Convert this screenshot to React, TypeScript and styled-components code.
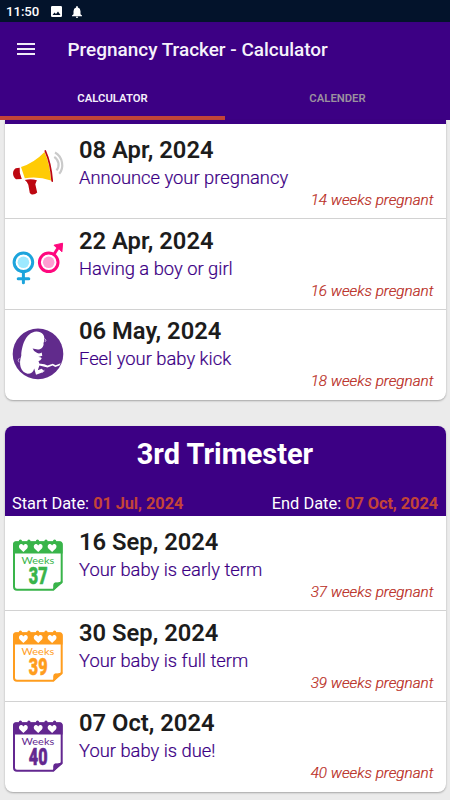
import React from "react";
import styled, { createGlobalStyle } from "styled-components";

const PURPLE = "#3c0084";
const ACCENT = "#c34438";

const GlobalStyle = createGlobalStyle`
  * { box-sizing: border-box; }
  html, body { margin: 0; padding: 0; }
  body { font-family: Roboto, sans-serif; background: #ebebeb; overflow: hidden; }
`;

const Screen = styled.div`
  width: 450px;
  height: 800px;
  overflow: hidden;
  background: #ebebeb;
  display: flex;
  flex-direction: column;
`;

const StatusBar = styled.div`
  height: 22px;
  flex: none;
  background: #03132b;
  color: #fff;
  display: flex;
  align-items: center;
  padding: 1px 0 0 6px;
  font-size: 13.2px;
  font-weight: 500;
  svg { display: block; }
`;

const Clock = styled.span`
  width: 45px;
  letter-spacing: -0.05px;
`;

const StatusIcon = styled.svg`
  margin-right: 10px;
  fill: #fff;
`;

const AppBar = styled.header`
  height: 54px;
  flex: none;
  background: ${PURPLE};
  display: flex;
  align-items: center;
  padding-left: 17px;
`;

const MenuIcon = styled.svg`
  width: 18px;
  height: 14px;
  margin-right: 32.5px;
  margin-top: -1px;
`;

const Title = styled.h1`
  margin: 0;
  color: #f6f2fb;
  font-size: 18.95px;
  font-weight: 500;
  white-space: nowrap;
`;

const Tabs = styled.nav`
  height: 44px;
  flex: none;
  display: flex;
  background: ${PURPLE};
`;

const Tab = styled.div<{ $active?: boolean }>`
  flex: 1;
  display: flex;
  align-items: center;
  justify-content: center;
  padding-top: 4px;
  border-bottom: 4px solid ${(p) => (p.$active ? ACCENT : PURPLE)};
  color: ${(p) => (p.$active ? "#f5effb" : "#9b909f")};
  font-size: 11.3px;
  font-weight: 600;
`;

const List = styled.main`
  flex: none;
  padding: 0 4.5px;
`;

const Card = styled.section<{ $continued?: boolean }>`
  background: #fff;
  border-radius: ${(p) => (p.$continued ? "0 0 8px 8px" : "8px")};
  overflow: hidden;
  margin-bottom: 26.5px;
  height: ${(p) => (p.$continued ? "279.5px" : "365.5px")};
  box-shadow: 0 1px 2px rgba(0, 0, 0, 0.3);
`;

const HeaderEdge = styled.div`
  height: 3.5px;
  background: ${PURPLE};
`;

const TrimesterHeader = styled.div`
  height: 89.5px;
  background: ${PURPLE};
  color: #fff;
  display: flex;
  flex-direction: column;
  justify-content: space-between;
  padding: 10px 7.5px 2px;
`;

const TrimesterName = styled.h2`
  margin: 0;
  text-align: center;
  font-size: 28.95px;
  line-height: 36px;
  font-weight: 700;
`;

const DateRange = styled.div`
  display: flex;
  justify-content: space-between;
  font-size: 16.4px;
  line-height: 21px;
  b { color: ${ACCENT}; font-weight: 700; letter-spacing: -0.1px; }
`;

const Row = styled.article<{ $first?: boolean }>`
  height: ${(p) => (p.$first ? "94.5px" : "90.6px")};
  padding: ${(p) => (p.$first ? "11px" : "6.6px")} 12px 0 8.5px;
  display: flex;
  border-top: ${(p) => (p.$first ? "0" : "1px solid #d2d2d2")};
`;

const Icon = styled.svg`
  width: 50px;
  height: 50px;
  flex: none;
  margin: 13px 16px 0 0;
  overflow: visible;
`;

const Details = styled.div`
  flex: 1;
  display: flex;
  flex-direction: column;
`;

const EventDate = styled.div`
  color: #1c1c1c;
  font-size: 23.75px;
  line-height: 31px;
  font-weight: 600;
`;

const EventName = styled.div`
  color: ${PURPLE};
  font-size: 18.35px;
  line-height: 24px;
  font-weight: 300;
  -webkit-text-stroke: 0.2px ${PURPLE};
`;

const Weeks = styled.div`
  align-self: flex-end;
  color: #b92b22;
  font-size: 15.25px;
  line-height: 21px;
  font-style: italic;
  font-weight: 300;
  -webkit-text-stroke: 0.2px #b92b22;
`;

const Megaphone = () => (
  <Icon viewBox="0 0 50 50">
    <path d="M8 19Q21 15 31.5 4Q37 16 38 32.5Q25 28 11.8 30.3Z" fill="#ffcb05" />
    <path d="M32.3 3Q37.8 15 39.2 33" fill="none" stroke="#bd0711" strokeWidth="1.8" strokeLinecap="round" />
    <path d="M6.7 19.7L2.7 20.3C-.8 22.4-1 28.2 3 31.2L8.8 31Q6 25.5 6.7 19.7Z" fill="#bd0711" />
    <path d="M11.8 32Q18 30.6 23.9 32.2Q22.8 34.5 22.3 36.3L24.2 44.5Q21.7 47 18.2 46.2L16.8 45L15.3 36.8Q14.3 33.8 11.8 32Z" fill="#bd0711" />
    <path d="M41.3 8.8C46 12 47 18.3 43.5 22.4M42 4.5C50 8.8 51.3 20 46.2 25.8" fill="none" stroke="#cacaca" strokeWidth="2.2" />
  </Icon>
);

const Genders = () => (
  <Icon viewBox="0 0 50 50">
    <g fill="none" stroke="#1ca4dc" strokeWidth="3" strokeLinecap="round">
      <circle cx="10.4" cy="23.3" r="9.3" />
      <path d="M10.4 33V43.8M5.2 39.7H15.8" />
    </g>
    <circle cx="10.4" cy="23.3" r="5.8" fill="#9de9ff" />
    <g fill="none" stroke="#ff087e" strokeWidth="3">
      <circle cx="35.7" cy="23.3" r="9.3" />
      <path d="M41 15.3L46 7.5" />
    </g>
    <path d="M41 6.2L49.6 4.2L48.9 12.8L46 9.8L42.4 7.7Z" fill="#ff087e" stroke="#ff087e" strokeLinejoin="round" />
    <circle cx="35.7" cy="23.3" r="5.8" fill="#ff9ed2" />
  </Icon>
);

const Baby = () => (
  <Icon viewBox="0 0 50 50">
    <circle cx="25" cy="24.9" r="25.3" fill="#612b8c" />
    <path
      d="M23.5 2.6C29 2.6 32.2 6.3 31.2 11.5C30.8 13.6 30.3 14 30.6 15.5C30 19 27.8 20.2 24.7 20.6L19.6 19.5Q20.2 22 24.2 24Q26.2 25.2 28.7 23.4L29.3 26.7L25.2 28Q28.8 27.8 28.7 29.5Q27.5 31.6 25.5 32.2L26.5 34.8Q31 34.4 34.5 36.5L39.8 34.7L42.6 36.2L47.7 34.2L46.5 36.6L42.3 38L39.6 36.6L34.5 38.5L26.4 36.5L24.8 41.2L28.6 39.8L31.5 42.2L28.5 43.8L23 45.8L21.2 39.5Q20 44.8 14.6 44.8C7.5 43 5.4 35 8.3 26.5C8.5 18.5 12 3.4 23.5 2.6Z"
      fill="#fff"
    />
    <path d="M31.5 9.5Q34.5 10.8 31.9 13M6.4 29.2Q3.8 31 6.2 33.4M31.4 40.8L29.3 43.8" fill="none" stroke="#cdb9df" strokeWidth=".9" />
  </Icon>
);

const Calendar = ({ color, week }: { color: string; week: string }) => (
  <Icon viewBox="0 0 50 50">
    <path d="M3 2.4H46.5Q48.7 2.4 48.7 5V41.8L40.3 49.7H4Q1 49.7 1 46.8V5Q1 2.4 3 2.4Z" fill="#fff" stroke={color} strokeWidth="2" />
    <path d="M.2 13.4V4.2Q.2 1.3 3 1.3H46.8Q49.6 1.3 49.6 4.2V13.4ZM40.2 50.3V45.2Q40.8 42 43.8 42.4L49.4 41.5V43Z" fill={color} />
    {[7.4, 15.9, 24.5, 33, 41.6].map((x) => (
      <circle key={x} cx={x} cy="1" r="1.6" fill={color} />
    ))}
    {[10.4, 25.2, 39.1].map((x) => (
      <path
        key={x}
        transform={`translate(${x} 7.4)`}
        d="M0 4.6L-3.7 1C-5.4-1.2-3.8-3.7-1.8-3.4Q-.7-3.3 0-1.9Q.7-3.3 1.8-3.4C3.8-3.7 5.4-1.2 3.7 1Z"
        fill="#fff"
      />
    ))}
    <text x="8.6" y="23.8" fontFamily="Lato, sans-serif" fontSize="10.3" fontWeight="400" textLength="32.6" lengthAdjust="spacingAndGlyphs" fill={color}>
      Weeks
    </text>
    <text x="15.8" y="44" fontFamily="Roboto, sans-serif" fontSize="23" fontWeight="900" textLength="18.7" lengthAdjust="spacingAndGlyphs" fill={color} stroke={color} strokeWidth=".6">
      {week}
    </text>
  </Icon>
);

interface Milestone {
  date: string;
  name: string;
  weeks: number;
  icon: React.ReactNode;
}

const secondTrimester: Milestone[] = [
  { date: "08 Apr, 2024", name: "Announce your pregnancy", weeks: 14, icon: <Megaphone /> },
  { date: "22 Apr, 2024", name: "Having a boy or girl", weeks: 16, icon: <Genders /> },
  { date: "06 May, 2024", name: "Feel your baby kick", weeks: 18, icon: <Baby /> },
];

const thirdTrimester: Milestone[] = [
  { date: "16 Sep, 2024", name: "Your baby is early term", weeks: 37, icon: <Calendar color="#39b44a" week="37" /> },
  { date: "30 Sep, 2024", name: "Your baby is full term", weeks: 39, icon: <Calendar color="#ff9d1e" week="39" /> },
  { date: "07 Oct, 2024", name: "Your baby is due!", weeks: 40, icon: <Calendar color="#632790" week="40" /> },
];

const Milestones = ({ items }: { items: Milestone[] }) => (
  <>
    {items.map((m, i) => (
      <Row key={m.weeks} $first={i === 0}>
        {m.icon}
        <Details>
          <EventDate>{m.date}</EventDate>
          <EventName>{m.name}</EventName>
          <Weeks>{m.weeks} weeks pregnant</Weeks>
        </Details>
      </Row>
    ))}
  </>
);

export default function App() {
  return (
    <Screen>
      <GlobalStyle />
      <StatusBar>
        <Clock>11:50</Clock>
        <StatusIcon width="11" height="11" viewBox="0 0 11 11">
          <path fillRule="evenodd" d="M1.2 0H9.8Q11 0 11 1.2V9.8Q11 11 9.8 11H1.2Q0 11 0 9.8V1.2Q0 0 1.2 0ZM1.5 9H9.5L7 5.5L5 8L3.5 6.4Z" />
        </StatusIcon>
        <StatusIcon width="10" height="12" viewBox="0 0 10 12">
          <path d="M5 0Q5.9 0 5.9 1.4Q8.5 2.2 8.5 5.2V8.2L10 9.5V10.2H0V9.5L1.5 8.2V5.2Q1.5 2.2 4.1 1.4Q4.1 0 5 0ZM3.8 10.8H6.2Q6 12 5 12Q4 12 3.8 10.8Z" />
        </StatusIcon>
      </StatusBar>
      <AppBar>
        <MenuIcon viewBox="0 0 18 14">
          <path d="M0 2H18M0 7H18M0 12H18" stroke="#f0eaf7" strokeWidth="2" />
        </MenuIcon>
        <Title>Pregnancy Tracker - Calculator</Title>
      </AppBar>
      <Tabs>
        <Tab $active>CALCULATOR</Tab>
        <Tab>CALENDER</Tab>
      </Tabs>
      <List>
        <Card $continued>
          <HeaderEdge />
          <Milestones items={secondTrimester} />
        </Card>
        <Card>
          <TrimesterHeader>
            <TrimesterName>3rd Trimester</TrimesterName>
            <DateRange>
              <span>Start Date: <b>01 Jul, 2024</b></span>
              <span>End Date: <b>07 Oct, 2024</b></span>
            </DateRange>
          </TrimesterHeader>
          <Milestones items={thirdTrimester} />
        </Card>
      </List>
    </Screen>
  );
}
